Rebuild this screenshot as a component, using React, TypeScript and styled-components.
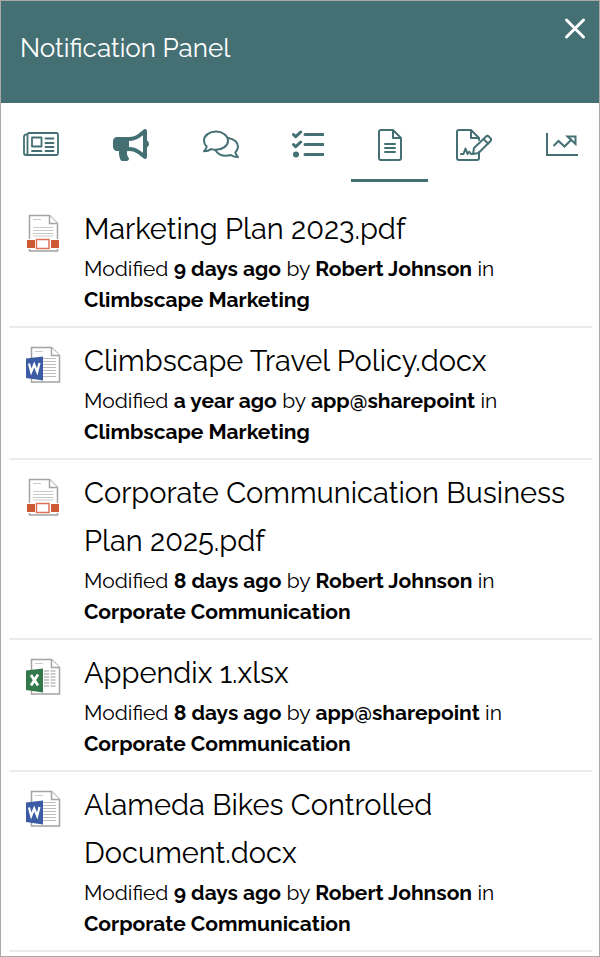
import React from "react";
import styled, { createGlobalStyle } from "styled-components";
import { FaBullhorn } from "react-icons/fa";

const teal = "#447074";

const GlobalStyle = createGlobalStyle`
  *, *::before, *::after { box-sizing: border-box; }
  body { margin: 0; background: #fff; }
`;

const Panel = styled.main`
  min-height: 100vh;
  padding-bottom: 4px;
  border: 1px solid #a9a9a9;
  background: #fff;
  color: #000;
  font-family: Raleway, Lato, "Open Sans", sans-serif;
  font-variant-numeric: oldstyle-nums;
`;

const Header = styled.header`
  display: flex;
  align-items: flex-start;
  justify-content: space-between;
  height: 102px;
  padding: 14px 10px 0 19px;
  background: ${teal};
  color: #fff;
`;

const Title = styled.h1`
  margin: 17px 0 0;
  font-size: 26px;
  font-weight: 400;
  line-height: 32px;
`;

const CloseButton = styled.button`
  display: flex;
  padding: 0;
  border: 0;
  background: none;
  color: inherit;
  cursor: pointer;
`;

const Tabs = styled.div`
  display: flex;
  justify-content: space-between;
  height: 79px;
  padding: 0 21px 0 22px;
`;

const Tab = styled.button`
  position: relative;
  display: flex;
  padding: 26px 0 0;
  border: 0;
  background: none;
  color: ${teal};
  cursor: pointer;

  &[aria-selected="true"]::after {
    content: "";
    position: absolute;
    left: -27px;
    right: -26px;
    bottom: 0;
    height: 3px;
    background: ${teal};
  }
`;

const TabIcon = styled.svg`
  display: block;
  height: 32px;
  fill: none;
  stroke: currentColor;
  stroke-width: 2;
  stroke-linecap: round;
  stroke-linejoin: round;
`;

const Megaphone = styled(FaBullhorn)`
  display: block;
  width: 36px;
  height: 32px;
`;

const List = styled.ul`
  margin: 14px 7px 0 8px;
  padding: 0;
  list-style: none;
`;

const Row = styled.li`
  display: flex;
  gap: 23px;
  padding: 9px 16px 11px;
  border-bottom: 2px solid #ebebeb;
`;

const FileIcon = styled.svg`
  flex: none;
  width: 36px;
  height: 40px;
  margin-top: 8px;
`;

const Details = styled.div`
  flex: 1;
  min-width: 0;
`;

const FileLink = styled.a`
  display: block;
  color: inherit;
  font-size: 29px;
  font-weight: 400;
  line-height: 48px;
  text-decoration: none;
`;

const Meta = styled.p`
  margin: 0;
  font-size: 21px;
  font-weight: 400;
  line-height: 31px;
`;

const NewsIcon = () => (
  <TabIcon width="36" viewBox="0 0 36 32" aria-hidden="true">
    <path d="M4.500 5.500H3A2 2 0 0 0 1 7.500V24a2 2 0 0 0 2 2H33.500a1.500 1.500 0 0 0 1.500-1.500V5.500A1.500 1.500 0 0 0 33.500 4H6A1.500 1.500 0 0 0 4.500 5.500V24a2 2 0 0 1-1.500 2" strokeWidth="1.800" />
    <path d="M9 8.500h9.500v9H9zM22.500 9.500h8M22.500 14h8M22.500 18h8M9 22h9.500M22.500 22h8" strokeWidth="1.800" />
  </TabIcon>
);

const MegaphoneIcon = () => <Megaphone aria-hidden="true" />;

const ChatIcon = () => (
  <TabIcon width="36" viewBox="0 0 36 32" aria-hidden="true">
    <path d="M13 2.500C6.400 2.500 1 6.500 1 11.700c0 2.300 1 4.300 2.700 5.900C3.300 19.500 2.200 21 1 22.300c3 .1 5.300-.9 7.100-2.200 1.500.5 3.200.7 4.900.7 6.600 0 12-4 12-9.100S19.600 2.500 13 2.500z" />
    <path d="M25.300 9C31 9.800 35 13.500 35 17.700c0 2.300-1 4.100-2.700 5.700.4 1.900 1.500 3.500 2.700 4.700-3 .1-5.300-.8-7.100-2.100-1.500.4-3.200.7-4.900.7-4.600 0-8.700-2.200-10.500-5.500" />
  </TabIcon>
);

const ChecklistIcon = () => (
  <TabIcon width="32" viewBox="0 0 32 32" aria-hidden="true">
    <path d="M1.500 5.500l2.200 2.200L8.700 3M1.500 15.500l2.200 2.200L8.700 13M13 5.500h18M13 15.500h18M13 25.500h18" strokeWidth="3" />
    <circle cx="4" cy="25.500" r="3" fill="currentColor" stroke="none" />
  </TabIcon>
);

const DocumentIcon = () => (
  <TabIcon width="24" viewBox="0 0 24 32" aria-hidden="true">
    <path d="M15 1H3a2 2 0 0 0-2 2v26a2 2 0 0 0 2 2h18a2 2 0 0 0 2-2V9zM15 1v8h8M7 15h10M7 19h10M7 23h10" />
  </TabIcon>
);

const SignatureIcon = () => (
  <TabIcon width="36" viewBox="0 0 36 32" aria-hidden="true">
    <path d="M23 11V9l-8-8H3a2 2 0 0 0-2 2v26a2 2 0 0 0 2 2h18a2 2 0 0 0 2-2v-6M15 1v8h8" />
    <path d="M17 25l1-6L29.800 7.700a2.300 2.300 0 0 1 3.200 0l1.300 1.300a2.300 2.300 0 0 1 0 3.200L22.500 24zM27.500 10l4.700 4.700M5 25h2.500l2-5.500 2 5.500 1.700-2.300L15 25h2" />
  </TabIcon>
);

const TrendIcon = () => (
  <TabIcon width="32" viewBox="0 0 32 32" aria-hidden="true">
    <path d="M1 4v22h31M7.500 17l5-5 6 5.500L26 10M21.500 7.500h8v7.500z" strokeLinecap="butt" strokeLinejoin="miter" />
  </TabIcon>
);

type FileKind = "pdf" | "word" | "excel";

const Thumbnail = ({ kind }: { kind: FileKind }) =>
  kind === "pdf" ? (
    <FileIcon viewBox="0 0 36 40" role="img" aria-label="PDF document">
      <path d="M4.500 2.500h20l8 8v27.500h-28z" fill="#fff" stroke="#a3a3a3" strokeWidth="1.500" />
      <path d="M24.500 2.500v8h8" fill="#fff" stroke="#a3a3a3" strokeWidth="1.500" />
      <path d="M8 6.500h8M8 14.500h20.500M8 17.500h20.500M8 20.500h20.500M8 23h20.500" stroke="#cacaca" />
      <path d="M2 26h32v10H2z" fill="#fff" />
      <path d="M2 27h8v8H2zM26 27h8v8h-8z" fill="#cd5935" />
      <path d="M11.500 26.500h12.500v9H11.500z" fill="#fff" stroke="#dd7356" strokeWidth="1.500" />
    </FileIcon>
  ) : (
    <FileIcon viewBox="0 0 36 40" role="img" aria-label={kind === "word" ? "Word document" : "Excel workbook"}>
      <path d="M6.500 2.500h20l8 8v26.500h-28z" fill="#fff" stroke="#a3a3a3" strokeWidth="1.500" />
      <path d="M26.500 2.500v8h8" fill="#fff" stroke="#a3a3a3" strokeWidth="1.500" />
      <path d="M10 6.500h8" stroke="#cacaca" />
      {kind === "word" ? (
        <path d="M18 13.500h13M18 16.500h13M18 19.500h13M18 22.500h13M18 25.500h13M18 28.500h13M18 31.500h13" stroke="#bdbdbd" />
      ) : (
        <path d="M19 14h5m1.500 0h5M19 17h5m1.500 0h5M19 20h5m1.500 0h5M19 23h5m1.500 0h5M19 26h5m1.500 0h5M19 29h5m1.500 0h5" stroke="#bdbdbd" strokeWidth="1.500" />
      )}
      <path d="M1 13.500L18 11.500v24L1 33z" fill={kind === "word" ? "#3b5ca5" : "#33784a"} />
      {kind === "word" ? (
        <path d="M4 18.500l2.200 8.500 3-7.500 3 7.500 2.300-9" fill="none" stroke="#fff" strokeWidth="2.200" />
      ) : (
        <path d="M6 18l7 10.500M13 17.500L6 28.500" fill="none" stroke="#fff" strokeWidth="2.800" />
      )}
    </FileIcon>
  );

const tabs = [
  { label: "News", Icon: NewsIcon },
  { label: "Announcements", Icon: MegaphoneIcon },
  { label: "Discussions", Icon: ChatIcon },
  { label: "Tasks", Icon: ChecklistIcon },
  { label: "Documents", Icon: DocumentIcon },
  { label: "Signatures", Icon: SignatureIcon },
  { label: "Trends", Icon: TrendIcon },
];

const files: { kind: FileKind; name: string; when: string; who: string; site: string }[] = [
  { kind: "pdf", name: "Marketing Plan 2023.pdf", when: "9 days ago", who: "Robert Johnson", site: "Climbscape Marketing" },
  { kind: "word", name: "Climbscape Travel Policy.docx", when: "a year ago", who: "app@sharepoint", site: "Climbscape Marketing" },
  { kind: "pdf", name: "Corporate Communication Business Plan 2025.pdf", when: "8 days ago", who: "Robert Johnson", site: "Corporate Communication" },
  { kind: "excel", name: "Appendix 1.xlsx", when: "8 days ago", who: "app@sharepoint", site: "Corporate Communication" },
  { kind: "word", name: "Alameda Bikes Controlled Document.docx", when: "9 days ago", who: "Robert Johnson", site: "Corporate Communication" },
];

export default function App() {
  const [active, setActive] = React.useState("Documents");
  return (
    <Panel>
      <GlobalStyle />
      <Header>
        <Title>Notification Panel</Title>
        <CloseButton type="button" aria-label="Close">
          <svg width="28" height="28" viewBox="0 0 28 28" stroke="currentColor" strokeWidth="3" strokeLinecap="round">
            <path d="M5.500 5l17 17M22.500 5l-17 17" />
          </svg>
        </CloseButton>
      </Header>
      <Tabs role="tablist">
        {tabs.map(({ label, Icon }) => (
          <Tab key={label} type="button" role="tab" aria-label={label} aria-selected={active === label} onClick={() => setActive(label)}>
            <Icon />
          </Tab>
        ))}
      </Tabs>
      <List>
        {files.map((file) => (
          <Row key={file.name}>
            <Thumbnail kind={file.kind} />
            <Details>
              <FileLink href="#">{file.name}</FileLink>
              <Meta>
                Modified <b>{file.when}</b> by <b>{file.who}</b> in <b>{file.site}</b>
              </Meta>
            </Details>
          </Row>
        ))}
      </List>
    </Panel>
  );
}
